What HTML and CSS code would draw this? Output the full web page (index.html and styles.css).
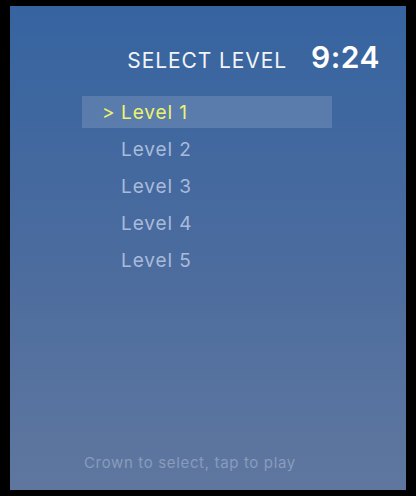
FILE: index.html
```html
<!DOCTYPE html>
<html>
	<head>
		<meta charset="UTF-8">
		<title>Select Level</title>
		<link rel="stylesheet" href="styles.css">
	</head>
	<body>
		<div class="screen">
			<div class="header">
				<span class="header-title">SELECT LEVEL</span>
				<span class="header-time">9:24</span>
			</div>
			<ul class="levels">
				<li class="levels-item current"><span class="levels-mark">&gt;</span>Level 1</li>
				<li class="levels-item"><span class="levels-mark"></span>Level 2</li>
				<li class="levels-item"><span class="levels-mark"></span>Level 3</li>
				<li class="levels-item"><span class="levels-mark"></span>Level 4</li>
				<li class="levels-item"><span class="levels-mark"></span>Level 5</li>
			</ul>
			<div class="hint">Crown to select, tap to play</div>
		</div>
	</body>
</html>
```

FILE: styles.css
```css
*{
	margin: 0;
	padding: 0;
	border: none;
}
body{
	background-color: #000;
	font-family: Inter, "Noto Sans", sans-serif;
}
.screen{
	width: 396px;
	height: 484px;
	margin: 6px 10px;
	display: flex;
	flex-direction: column;
	background: linear-gradient(180deg, #3664a0 0%, #4a6b9e 50%, #5f779f 100%);
}
.header{
	display: flex;
	justify-content: flex-end;
	align-items: baseline;
	gap: 24px;
	padding: 33px 26px 0 0;
}
.header-title{
	color: #f2f4f8;
	font-size: 21px;
	letter-spacing: 0.9px;
}
.header-time{
	color: #fff;
	font-size: 30px;
	font-weight: 600;
	letter-spacing: 0.5px;
}
.levels{
	list-style: none;
	margin: 21px 0 0 72px;
	width: 250px;
	display: flex;
	flex-direction: column;
	gap: 5px;
}
.levels-item{
	height: 32px;
	display: flex;
	align-items: center;
	padding-left: 20px;
	font-size: 19px;
	letter-spacing: 0.9px;
	color: #a9bbdb;
}
.levels-mark{
	width: 19px;
}
.current{
	background-color: rgba(255,255,255,0.14);
	color: #eef36e;
}
.hint{
	margin-top: auto;
	padding: 0 0 18px 74px;
	font-size: 15px;
	letter-spacing: 0.65px;
	color: #8a9bbd;
}
```
